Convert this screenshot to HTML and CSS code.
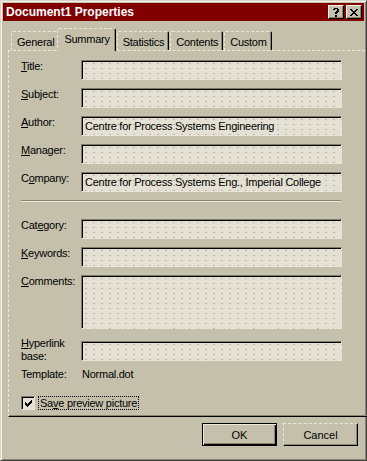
FILE: index.html
```html
<!DOCTYPE html>
<html lang="en">
<head>
    <meta charset="UTF-8">
    <meta name="viewport" content="width=device-width, initial-scale=1.0">
    <title>Document1 Properties</title>
    <link rel="stylesheet" href="styles.css">
</head>
<body>
    <div class="window">
        <div class="titlebar">
            <span class="title">Document1 Properties</span>
            <div class="title-buttons">
                <span class="tbtn">
                    <svg width="8" height="9" viewBox="0 0 8 9">
                        <path d="M1 1h1V0h4v1h1v3H6v1H5v1H3V4h1V3h1V1H3v1H1z M3 7h2v2H3z" fill="#000"/>
                    </svg>
                </span>
                <span class="tbtn">
                    <svg width="8" height="7" viewBox="0 0 8 7">
                        <path d="M0 0h2v1h1v1h2V1h1V0h2v1H7v1H6v1H5v1h1v1h1v1h1v1H6V6H5V5H3v1H2v1H0V6h1V5h1V4h1V3H2V2H1V1H0z" fill="#000"/>
                    </svg>
                </span>
            </div>
        </div>

        <div class="tabs">
            <span class="tab">General</span>
            <span class="tab active">Summary</span>
            <span class="tab">Statistics</span>
            <span class="tab">Contents</span>
            <span class="tab">Custom</span>
        </div>

        <div class="panel">
            <div class="row">
                <span class="label"><u>T</u>itle:</span>
                <div class="field"></div>
            </div>
            <div class="row">
                <span class="label"><u>S</u>ubject:</span>
                <div class="field"></div>
            </div>
            <div class="row">
                <span class="label"><u>A</u>uthor:</span>
                <div class="field">Centre for Process Systems Engineering</div>
            </div>
            <div class="row">
                <span class="label"><u>M</u>anager:</span>
                <div class="field"></div>
            </div>
            <div class="row">
                <span class="label">C<u>o</u>mpany:</span>
                <div class="field">Centre for Process Systems Eng., Imperial College</div>
            </div>

            <div class="sep"></div>

            <div class="row">
                <span class="label">Cat<u>e</u>gory:</span>
                <div class="field"></div>
            </div>
            <div class="row">
                <span class="label"><u>K</u>eywords:</span>
                <div class="field"></div>
            </div>
            <div class="row">
                <span class="label"><u>C</u>omments:</span>
                <div class="field tall"></div>
            </div>
            <div class="row link-row">
                <span class="label"><u>H</u>yperlink<br>base:</span>
                <div class="field"></div>
            </div>
            <div class="row info-row">
                <span class="label">Template:</span>
                <span class="value">Normal.dot</span>
            </div>

            <div class="check-row">
                <span class="checkbox">
                    <svg width="7" height="7" viewBox="0 0 7 7">
                        <path d="M0 2h1v1h1v1h1V3h1V2h1V1h1V0h1v3H6v1H5v1H4v1H3v1H2V6H1V5H0z" fill="#000"/>
                    </svg>
                </span>
                <span class="check-label">Sa<u>v</u>e preview picture</span>
            </div>
        </div>

        <div class="buttons">
            <button class="btn default">OK</button>
            <button class="btn">Cancel</button>
        </div>
    </div>
</body>
</html>
```

FILE: styles.css
```css
body {
    margin: 0;
    background-color: #c4c0ac;
    font-family: "Liberation Sans", Arial, sans-serif;
    font-size: 11px;
    letter-spacing: -0.25px;
    color: #000;
}

.window {
    width: 367px;
    height: 461px;
    box-sizing: border-box;
    padding: 1px;
    border: 1px solid;
    border-color: #d8d4c4 #404040 #404040 #d8d4c4;
    box-shadow: inset 1px 1px #f4f2ea, inset -1px -1px #8a866f;
    background-color: #c4c0ac;
}

.titlebar {
    height: 18px;
    margin: 1px 1px 0 1px;
    background-color: #800000;
    display: flex;
    align-items: center;
    justify-content: space-between;
    padding: 0 2px 0 3px;
}

.title {
    color: #fff;
    font-weight: bold;
    font-size: 12px;
    letter-spacing: 0;
}

.title-buttons {
    display: flex;
    gap: 2px;
}

.tbtn {
    width: 14px;
    height: 12px;
    background-color: #c4c0ac;
    border: 1px solid;
    border-color: #f4f2ea #000 #000 #f4f2ea;
    box-shadow: inset -1px -1px #8a866f;
    display: flex;
    align-items: center;
    justify-content: center;
}

.tabs {
    display: flex;
    align-items: flex-end;
    height: 20px;
    margin: 9px 0 0 9px;
    position: relative;
    z-index: 1;
}

.tab {
    height: 17px;
    padding: 1px 4px 0 5px;
    display: flex;
    align-items: center;
    border-top: 1px dashed #ece9dc;
    border-left: 1px dashed #ece9dc;
    border-right: 1px solid #000;
    box-shadow: inset -1px 0 #8a866f;
    border-radius: 2px 2px 0 0;
    margin-right: 1px;
}

.tab:first-child {
    border-right: none;
    box-shadow: none;
    margin-right: 0;
}

.tab.active {
    height: 20px;
    margin-left: -1px;
    margin-bottom: -1px;
    padding: 0 5px 2px 6px;
    background-color: #c4c0ac;
}

.panel {
    width: 348px;
    margin-left: 6px;
    border: 1px solid;
    border-top-style: dashed;
    border-left-style: dashed;
    border-color: #ece9dc #000 #000 #ece9dc;
    box-shadow: inset -1px -1px #8a866f;
    padding: 9px 0 6px 12px;
}

.row {
    display: flex;
    margin-bottom: 8px;
}

.label {
    width: 60px;
    line-height: 13px;
}

.field {
    width: 256px;
    height: 16px;
    border: 1px solid;
    border-color: #7f7b66 #ece9dc #ece9dc #7f7b66;
    border-right-style: dashed;
    border-bottom-style: dashed;
    box-shadow: inset 1px 1px #000;
    background-color: #e4e1d4;
    background-image: radial-gradient(circle, #bdb9a4 0.6px, transparent 1px);
    background-size: 8px 5px;
    padding: 1px 0 1px 3px;
    line-height: 16px;
    white-space: nowrap;
}

.field.tall {
    height: 50px;
}

.sep {
    width: 320px;
    height: 1px;
    background-color: #8a866f;
    border-bottom: 1px solid #ece9dc;
    margin: 4px 0 17px 0;
}

.link-row {
    margin-top: 1px;
    margin-bottom: 5px;
}

.link-row .field {
    margin-top: 4px;
}

.info-row {
    margin-bottom: 15px;
}

.value {
    line-height: 13px;
    padding-left: 1px;
}

.check-row {
    display: flex;
    align-items: center;
    gap: 3px;
}

.checkbox {
    width: 11px;
    height: 11px;
    border: 1px solid;
    border-color: #7f7b66 #ece9dc #ece9dc #7f7b66;
    border-right-style: dashed;
    border-bottom-style: dashed;
    box-shadow: inset 1px 1px #000;
    background-color: #e4e1d4;
    display: flex;
    align-items: center;
    justify-content: center;
    padding: 1px 0 0 1px;
    box-sizing: content-box;
}

.check-label {
    border: 1px dotted #000;
    padding: 0 1px;
    line-height: 12px;
}

.buttons {
    display: flex;
    justify-content: flex-end;
    gap: 6px;
    margin: 6px 7px 0 0;
}

.btn {
    width: 75px;
    height: 23px;
    font-family: "Liberation Sans", Arial, sans-serif;
    font-size: 11px;
    color: #000;
    background-color: #c4c0ac;
    border: 1px solid;
    border-color: #ece9dc #000 #000 #ece9dc;
    border-top-style: dashed;
    border-left-style: dashed;
    box-shadow: inset -1px -1px #8a866f;
    padding: 0;
}

.btn.default {
    border: 1px solid #000;
    box-shadow: inset 1px 1px #ece9dc, inset -1px -1px #000, inset -2px -2px #8a866f;
}
```
